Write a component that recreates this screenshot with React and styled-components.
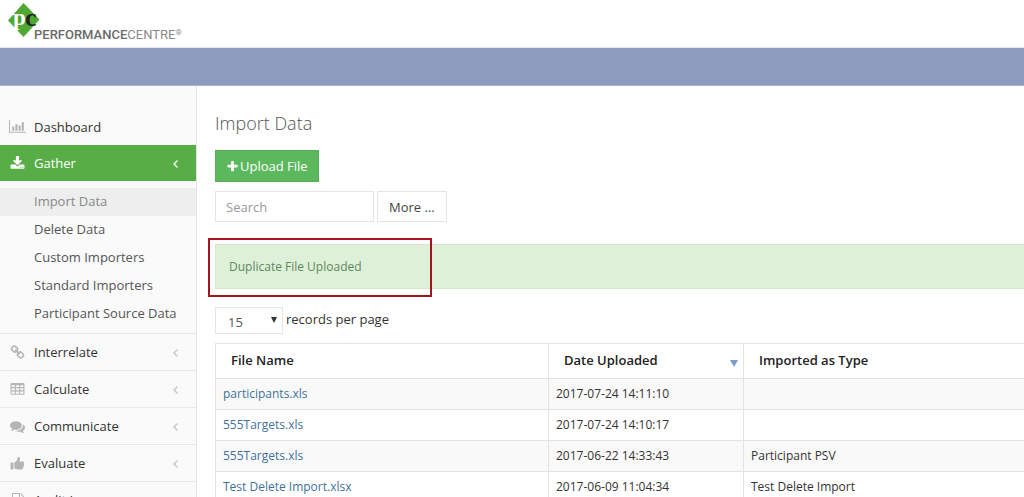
import { useState } from "react";
import styled, { createGlobalStyle } from "styled-components";

const GlobalStyle = createGlobalStyle`
    * {
        box-sizing: border-box;
    }

    body {
        margin: 0;
        overflow: hidden;
        background: #fff;
        color: #333;
        font-family: "Open Sans", "Noto Sans", sans-serif;
        font-size: 13px;
    }

    button,
    input,
    select {
        font-family: inherit;
        border-radius: 0;
        margin: 0;
    }

    a {
        text-decoration: none;
    }
`;

const Page = styled.div`
    display: flex;
    flex-direction: column;
    height: 100vh;
`;

const Header = styled.header`
    display: flex;
    flex: none;
    align-items: flex-start;
    height: 48px;
    padding: 3px 8px 0;
    border-bottom: 1px solid #e4e6ea;
`;

const LogoMark = styled.svg`
    flex: none;
    width: 32px;
    height: 34px;
`;

const LogoText = styled.span`
    margin: 22px 0 0 -6px;
    color: #8a8a8a;
    font-family: Roboto, "Open Sans", sans-serif;
    font-size: 13px;
    line-height: 20px;

    b {
        color: #6a6a6a;
        font-weight: 500;
    }

    sup {
        font-size: 8px;
        line-height: 8px;
        vertical-align: 4px;
    }
`;

const Band = styled.div`
    flex: none;
    height: 38px;
    background: #8c9cbf;
    border-bottom: 1px solid #a9b4ce;
`;

const Body = styled.div`
    display: flex;
    flex: 1;
    min-height: 0;
`;

const Sidebar = styled.nav`
    flex: none;
    width: 197px;
    padding-top: 23px;
    overflow: hidden;
    background: #fafafa;
    border-right: 1px solid #e3e3e3;
`;

const MenuItem = styled.a`
    display: flex;
    align-items: center;
    height: ${(props) => (props.$plain ? "36px" : "37px")};
    padding: 0 15px 0 9px;
    border-bottom: ${(props) => (props.$plain ? "none" : "1px solid #e7e7e7")};
    background: ${(props) => (props.$active ? "#57ae47" : "transparent")};
    color: ${(props) => (props.$active ? "#fff" : "#333")};
    font-size: 13px;
    line-height: 20px;
`;

const MenuIcon = styled.span`
    display: flex;
    justify-content: center;
    width: 17px;
    margin-right: 8px;
    color: ${(props) => (props.$active ? "#fff" : "#b5b5b5")};
`;

const Arrow = styled.svg`
    width: 10px;
    height: 10px;
    margin: 2px 0 0 auto;
    fill: none;
    stroke: ${(props) => (props.$active ? "#fff" : "#c4c4c4")};
`;

const SubMenu = styled.div`
    padding: 7px 0 5px;
    border-bottom: 1px solid #e7e7e7;
`;

const SubItem = styled.a`
    display: block;
    height: 28px;
    padding-left: 34px;
    background: ${(props) => (props.$active ? "#eee" : "transparent")};
    color: ${(props) => (props.$active ? "#888" : "#555")};
    font-size: 13px;
    line-height: 26px;
`;

const Content = styled.main`
    flex: 1;
    min-width: 0;
    padding: 24px 0 0 18px;
    overflow: hidden;
`;

const Title = styled.h1`
    margin: 0 0 14px;
    color: #555;
    font-size: 18px;
    font-weight: 300;
    line-height: 26px;
`;

const UploadButton = styled.button`
    display: flex;
    align-items: center;
    gap: 1px;
    height: 32px;
    padding: 0 10px;
    border: 1px solid #55b055;
    background: #5cb85c;
    color: #fff;
    font-size: 13px;
`;

const SearchRow = styled.div`
    display: flex;
    gap: 3px;
    margin: 9px 0 22px;
`;

const SearchInput = styled.input`
    width: 159px;
    height: 31px;
    padding: 0 10px;
    border: 1px solid #e5e5e5;
    background: #fff;
    color: #555;
    font-size: 13px;

    &::placeholder {
        color: #999;
    }
`;

const MoreButton = styled.button`
    height: 31px;
    padding: 0 11px;
    border: 1px solid #e5e5e5;
    background: #fff;
    color: #444;
    font-size: 13px;
`;

const Alert = styled.div`
    position: relative;
    height: 45px;
    padding: 0 13px;
    border: 1px solid #d6e9c6;
    border-right: none;
    background: #dff0d8;
    color: #5b8a5c;
    font-size: 12px;
    line-height: 43px;
`;

const Highlight = styled.span`
    position: absolute;
    top: -7px;
    left: -8px;
    width: 224px;
    height: 59px;
    border: 2px solid #a3151d;
`;

const LengthLabel = styled.label`
    display: flex;
    gap: 3px;
    margin: 18px 0 9px;
    font-size: 13px;
    line-height: 24px;
`;

const SelectBox = styled.span`
    position: relative;
    display: flex;
`;

const LengthSelect = styled.select`
    appearance: none;
    width: 68px;
    height: 27px;
    padding: 2px 12px 0;
    border: 1px solid #e5e5e5;
    background: #fff;
    color: #555;
    font-size: 13px;
`;

const SelectArrow = styled.svg`
    position: absolute;
    top: 10px;
    right: 6px;
    width: 6px;
    height: 6px;
    fill: #333;
    pointer-events: none;
`;

const FileTable = styled.table`
    width: 100%;
    border-collapse: separate;
    border-spacing: 0;
    border-top: 1px solid #e3e3e3;
    border-left: 1px solid #e3e3e3;
    table-layout: fixed;
`;

const HeadCell = styled.th`
    width: ${(props) => props.$width || "auto"};
    height: 35px;
    padding: 0 5px 2px 15px;
    border-bottom: 1px solid #e3e3e3;
    border-right: 1px solid #e3e3e3;
    color: #222;
    font-size: 13px;
    font-weight: 600;
    line-height: 20px;
    text-align: left;

    &:last-child {
        border-right: none;
    }
`;

const HeadLabel = styled.div`
    display: flex;
    align-items: center;
    justify-content: space-between;
`;

const SortArrow = styled.svg`
    width: 8px;
    height: 7px;
    margin-top: 6px;
    fill: #7b9bd2;
`;

const Row = styled.tr`
    background: #fff;

    &:nth-child(odd) {
        background: #f9f9f9;
    }
`;

const Cell = styled.td`
    height: 31px;
    padding: 0 7px;
    border-bottom: 1px solid #e3e3e3;
    border-right: 1px solid #e3e3e3;
    font-size: 12px;
    line-height: 20px;

    &:last-child {
        border-right: none;
    }

    a {
        color: #3f729b;
    }
`;

// Glyphs are drawn on the 1792 unit grid
const glyphs = {
    download:
        "M1344 1344q0-26-19-45t-45-19-45 19-19 45 19 45 45 19 45-19 19-45zm256 0q0-26-19-45t-45-19-45 19-19 45 19 45 45 19 45-19 19-45zm128-224v320q0 40-28 68t-68 28h-1472q-40 0-68-28t-28-68v-320q0-40 28-68t68-28h465l135 136q58 56 136 56t136-56l136-136h464q40 0 68 28t28 68zm-325-569q17 41-14 70l-448 448q-18 19-45 19t-45-19l-448-448q-31-29-14-70 17-39 59-39h256v-448q0-26 19-45t45-19h256q26 0 45 19t19 45v448h256q42 0 59 39z",
    link: "M1520 1216q0-40-28-68l-208-208q-28-28-68-28-42 0-72 32 3 3 19 18.5t21.5 21.5 15 19 13 25.5 3.5 27.5q0 40-28 68t-68 28q-15 0-27.5-3.5t-25.5-13-19-15-21.5-21.5-18.5-19q-33 31-33 73 0 40 28 68l206 207q27 27 68 27 40 0 68-26l147-146q28-28 28-67zm-703-705q0-40-28-68l-206-207q-28-28-68-28-39 0-68 27l-147 146q-28 28-28 67 0 40 28 68l208 208q27 27 68 27 42 0 72-31-3-3-19-18.5t-21.5-21.5-15-19-13-25.5-3.5-27.5q0-40 28-68t68-28q15 0 27.5 3.5t25.5 13 19 15 21.5 21.5 18.5 19q33-31 33-73zm895 705q0 120-85 203l-147 146q-83 83-203 83-121 0-204-85l-206-207q-83-83-83-203 0-123 88-209l-88-88q-86 88-208 88-120 0-204-84l-208-208q-84-84-84-204t85-203l147-146q83-83 203-83 121 0 204 85l206 207q83 83 83 203 0 123-88 209l88 88q86-88 208-88 120 0 204 84l208 208q84 84 84 204z",
    table: "M160 128h1472q96 0 96 96v1216q0 96-96 96h-1472q-96 0-96-96v-1216q0-96 96-96zM192 384v224h384v-224zM704 384v224h384v-224zM1216 384v224h384v-224zM192 736v256h384v-256zM704 736v256h384v-256zM1216 736v256h384v-256zM192 1120v288h384v-288zM704 1120v288h384v-288zM1216 1120v288h384v-288z",
    comments:
        "M1408 768q0 139-94 257t-256.5 186.5-353.5 68.5q-86 0-176-16-124 88-278 128-36 9-86 16h-3q-11 0-20.5-8t-11.5-21q-1-3-1-6.5t.5-6.5 2-6l2.5-5 3.5-5.5 4-5 4.5-5 4-4.5q5-6 23-25t26-29.5 22.5-29 25-38.5 20.5-44q-124-72-195-177t-71-224q0-139 94-257t256.5-186.5 353.5-68.5 353.5 68.5 256.5 186.5 94 257zm384 256q0 120-71 224.5t-195 176.5q10 24 20.5 44t25 38.5 22.5 29 26 29.5 23 25q1 1 4 4.5t4.5 5 4 5 3.5 5.5l2.5 5 2 6 .5 6.5-1 6.5q-3 14-13 22t-22 7q-50-7-86-16-154-40-278-128-90 16-176 16-271 0-472-132 58 4 88 4 161 0 309-45t264-129q125-92 192-212t67-254q0-77-23-152 129 71 204 178t75 230z",
    thumb: "M64 768h352v832h-352zM512 800c130-70 290-260 350-400 50-130 20-270 120-290 200-20 250 150 220 310-15 90-60 150-70 230h420c130 0 190 170 90 260 70 90 60 200-30 260 40 90 10 180-60 230 20 130-60 200-190 200h-400c-170 0-290-80-450-100z",
    file: "M1596 380q28 28 48 76t20 88v1152q0 40-28 68t-68 28h-1344q-40 0-68-28t-28-68v-1600q0-40 28-68t68-28h896q40 0 88 20t76 48zm-444-244v376h376q-10-29-22-41l-313-313q-12-12-41-22zm384 1528v-1024h-416q-40 0-68-28t-28-68v-416h-768v1536h1280z",
    plus: "M1600 736v192q0 40-28 68t-68 28h-416v416q0 40-28 68t-68 28h-192q-40 0-68-28t-28-68v-416h-416q-40 0-68-28t-28-68v-192q0-40 28-68t68-28h416v-416q0-40 28-68t68-28h192q40 0 68 28t28 68v416h416q40 0 68 28t28 68z",
};

function Glyph({ name, size }) {
    return (
        <svg width={size} height={size} viewBox="0 0 1792 1792" fill="currentColor" fillRule="evenodd">
            <path d={glyphs[name]} />
        </svg>
    );
}

function ChartIcon() {
    return (
        <svg width="17" height="14" viewBox="0 0 2048 1664" fill="currentColor">
            <path d="M640 768v512h-256v-512zM1024 512v768h-256v-768zM2048 1408v128h-2048v-1536h128v1408zM1408 640v640h-256v-640zM1792 256v1024h-256v-1024z" />
        </svg>
    );
}

const subItems = [
    "Import Data",
    "Delete Data",
    "Custom Importers",
    "Standard Importers",
    "Participant Source Data",
];

const menuItems = [
    { label: "Interrelate", icon: <Glyph name="link" size={15} /> },
    { label: "Calculate", icon: <Glyph name="table" size={15} /> },
    { label: "Communicate", icon: <Glyph name="comments" size={15} /> },
    { label: "Evaluate", icon: <Glyph name="thumb" size={15} /> },
    { label: "Audit Log", icon: <Glyph name="file" size={14} /> },
];

const files = [
    { name: "participants.xls", date: "2017-07-24 14:11:10", type: "" },
    { name: "555Targets.xls", date: "2017-07-24 14:10:17", type: "" },
    { name: "555Targets.xls", date: "2017-06-22 14:33:43", type: "Participant PSV" },
    { name: "Test Delete Import.xlsx", date: "2017-06-09 11:04:34", type: "Test Delete Import" },
];

function MenuArrow({ active }) {
    return (
        <Arrow $active={active} viewBox="0 0 10 10" strokeWidth="1.3">
            <path d="M6.5 1.5L3 5l3.5 3.5" />
        </Arrow>
    );
}

function Logo() {
    return (
        <>
            <LogoMark viewBox="0 0 32 34">
                <path d="M15.5 0L31.5 16.5L15.5 34L0 17.5z" fill="#4fa832" />
                <text x="5" y="22" fill="#fff" fontFamily="Liberation Serif, serif" fontWeight="bold" fontSize="23">
                    p
                </text>
                <text x="17" y="23" fill="#222" fontFamily="Liberation Serif, serif" fontWeight="bold" fontSize="26">
                    c
                </text>
            </LogoMark>
            <LogoText>
                <b>PERFORMANCE</b>CENTRE<sup>®</sup>
            </LogoText>
        </>
    );
}

function App() {
    const [search, setSearch] = useState("");
    const [length, setLength] = useState("15");

    return (
        <Page>
            <GlobalStyle />
            <Header>
                <Logo />
            </Header>
            <Band />
            <Body>
                <Sidebar>
                    <MenuItem href="#dashboard" $plain>
                        <MenuIcon>
                            <ChartIcon />
                        </MenuIcon>
                        Dashboard
                    </MenuItem>
                    <MenuItem href="#gather" $active $plain>
                        <MenuIcon $active>
                            <Glyph name="download" size={15} />
                        </MenuIcon>
                        Gather
                        <MenuArrow active />
                    </MenuItem>
                    <SubMenu>
                        {subItems.map((item, index) => (
                            <SubItem key={item} href="#gather" $active={index === 0}>
                                {item}
                            </SubItem>
                        ))}
                    </SubMenu>
                    {menuItems.map((item) => (
                        <MenuItem key={item.label} href="#menu">
                            <MenuIcon>{item.icon}</MenuIcon>
                            {item.label}
                            {item.label !== "Audit Log" && <MenuArrow />}
                        </MenuItem>
                    ))}
                </Sidebar>
                <Content>
                    <Title>Import Data</Title>
                    <UploadButton type="button">
                        <Glyph name="plus" size={13} />
                        Upload File
                    </UploadButton>
                    <SearchRow>
                        <SearchInput
                            aria-label="Search"
                            placeholder="Search"
                            value={search}
                            onChange={(e) => setSearch(e.target.value)}
                        />
                        <MoreButton type="button">More ...</MoreButton>
                    </SearchRow>
                    <Alert role="alert">
                        Duplicate File Uploaded
                        <Highlight />
                    </Alert>
                    <LengthLabel>
                        <SelectBox>
                            <LengthSelect value={length} onChange={(e) => setLength(e.target.value)}>
                                <option>15</option>
                                <option>25</option>
                                <option>50</option>
                            </LengthSelect>
                            <SelectArrow viewBox="0 0 6 6">
                                <path d="M0 0h6L3 6z" />
                            </SelectArrow>
                        </SelectBox>
                        records per page
                    </LengthLabel>
                    <FileTable>
                        <thead>
                            <tr>
                                <HeadCell $width="333px">File Name</HeadCell>
                                <HeadCell $width="195px">
                                    <HeadLabel>
                                        Date Uploaded
                                        <SortArrow viewBox="0 0 8 7">
                                            <path d="M0 0h8L4 7z" />
                                        </SortArrow>
                                    </HeadLabel>
                                </HeadCell>
                                <HeadCell>Imported as Type</HeadCell>
                            </tr>
                        </thead>
                        <tbody>
                            {files.map((file, index) => (
                                <Row key={index}>
                                    <Cell>
                                        <a href="#file">{file.name}</a>
                                    </Cell>
                                    <Cell>{file.date}</Cell>
                                    <Cell>{file.type}</Cell>
                                </Row>
                            ))}
                        </tbody>
                    </FileTable>
                </Content>
            </Body>
        </Page>
    );
}

export default App;
